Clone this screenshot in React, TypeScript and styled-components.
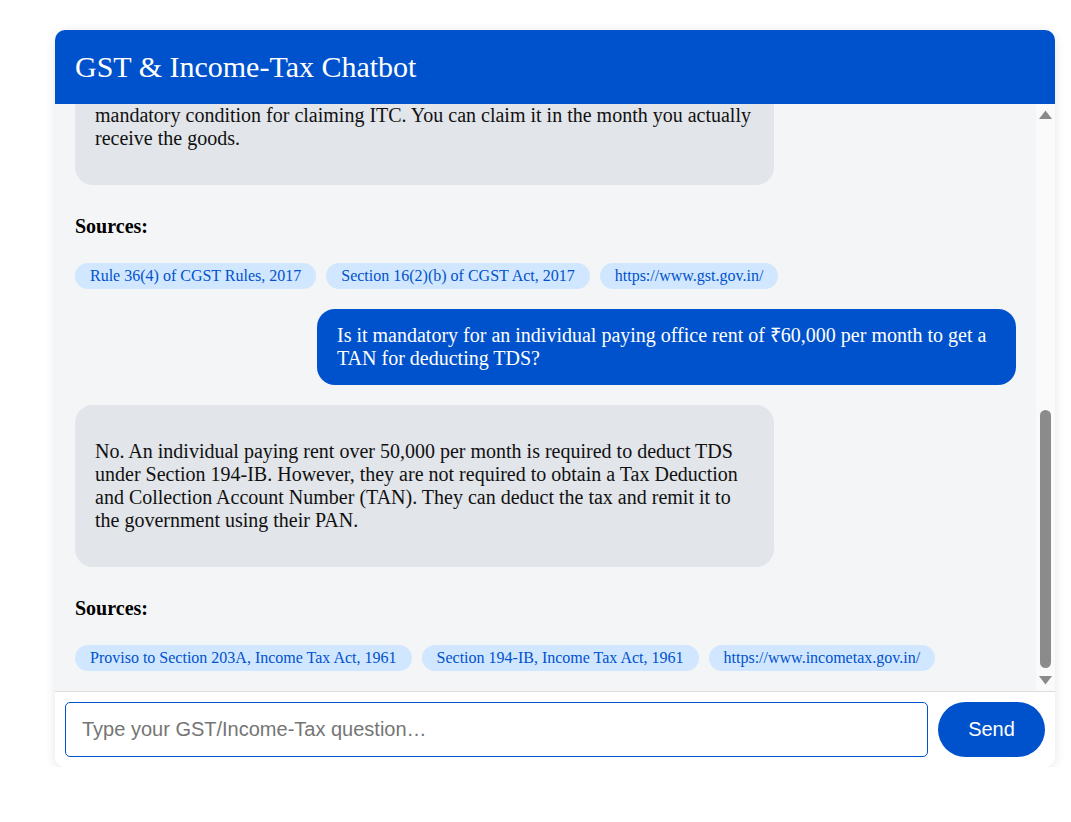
import React, { useLayoutEffect, useRef, useState } from "react";
import styled, { createGlobalStyle } from "styled-components";

const GlobalStyle = createGlobalStyle`
  html, body { margin: 0; padding: 0; background: #ffffff; }
  body { font-family: "Liberation Serif", "Times New Roman", serif; }
  * { box-sizing: border-box; }
`;

const Page = styled.div`
  padding: 30px 16px 0 55px;
`;

const Card = styled.div`
  width: 1000px;
  background: #ffffff;
  border-radius: 10px;
  overflow: hidden;
  box-shadow: 0 2px 12px rgba(0, 0, 0, 0.1);
  display: flex;
  flex-direction: column;
`;

const Header = styled.header`
  height: 74px;
  background: #0052cc;
  color: #ffffff;
  display: flex;
  align-items: center;
  padding: 0 20px;
`;

const Title = styled.h1`
  margin: 0;
  font-family: "Liberation Serif", "Times New Roman", serif;
  font-weight: 400;
  font-size: 30px;
`;

const RAIL_W = 19;
const BTN_H = 19;

const Viewport = styled.div`
  position: relative;
  height: 587px;
  background: #f4f5f7;
`;

const Messages = styled.div`
  height: 100%;
  overflow-y: auto;
  padding: 20px ${20 + RAIL_W}px 20px 20px;
  display: flex;
  flex-direction: column;
  gap: 20px;
  scrollbar-width: none;
  &::-webkit-scrollbar { display: none; }
`;

const Rail = styled.div`
  position: absolute;
  top: 0;
  right: 0;
  bottom: 0;
  width: ${RAIL_W}px;
  background: #fafafa;
  display: flex;
  flex-direction: column;
  justify-content: space-between;
`;

const ArrowButton = styled.svg`
  display: block;
  width: ${RAIL_W}px;
  height: ${BTN_H}px;
`;

const Thumb = styled.div`
  position: absolute;
  left: 4px;
  width: 11px;
  background: #8b8b8b;
  border-radius: 6px;
`;

const Bubble = styled.div<{ $user?: boolean }>`
  max-width: 699px;
  align-self: ${(p) => (p.$user ? "flex-end" : "flex-start")};
  background: ${(p) => (p.$user ? "#0052cc" : "#e2e5ea")};
  color: ${(p) => (p.$user ? "#ffffff" : "#111111")};
  border-radius: 18px;
  padding: ${(p) => (p.$user ? "15px 20px" : "35px 20px")};
  font-size: 20px;
  line-height: 23px;
  flex-shrink: 0;
`;

const Sources = styled.div`
  padding-top: 10px;
  flex-shrink: 0;
`;

const SourcesLabel = styled.div`
  font-weight: 700;
  font-size: 20px;
  line-height: 23px;
  color: #000000;
`;

const ChipRow = styled.div`
  margin-top: 25px;
  display: flex;
  flex-wrap: wrap;
  gap: 10px;
`;

const Chip = styled.span`
  height: 26px;
  display: inline-flex;
  align-items: center;
  padding: 0 15px;
  border-radius: 13px;
  background: #d1e7ff;
  color: #0052cc;
  font-size: 16px;
`;

const InputBar = styled.div`
  border-top: 1px solid #dddddd;
  padding: 10px;
  display: flex;
  gap: 10px;
  background: #ffffff;
`;

const TextInput = styled.input`
  flex: 1;
  height: 55px;
  border: 1px solid #0052cc;
  border-radius: 5px;
  padding: 0 16px;
  font-family: "Liberation Sans", Arial, sans-serif;
  font-size: 20px;
  color: #222222;
  outline: none;
  &::placeholder { color: #757575; }
`;

const SendButton = styled.button`
  width: 107px;
  height: 55px;
  border: none;
  border-radius: 28px;
  background: #0052cc;
  color: #ffffff;
  font-family: "Liberation Sans", Arial, sans-serif;
  font-size: 20px;
  cursor: pointer;
`;

type Msg =
  | { kind: "user"; text: React.ReactNode }
  | { kind: "bot"; text: React.ReactNode }
  | { kind: "sources"; items: string[] };

const messages: Msg[] = [
  { kind: "user", text: "What is the GST rate on restaurant services?" },
  {
    kind: "bot",
    text: "Restaurant services (other than those in hotels with room tariff above ₹7,500) attract GST at 5% without Input Tax Credit. Outdoor catering is taxed at 18% with ITC.",
  },
  {
    kind: "sources",
    items: ["Notification No. 11/2017-Central Tax (Rate)", "https://www.gst.gov.in/"],
  },
  {
    kind: "user",
    text: "I received goods in April but the supplier's invoice is dated March. Can I claim ITC in March itself?",
  },
  {
    kind: "bot",
    text: (
      <>
        No. The date on the invoice does not decide when you can take Input Tax Credit. Under
        Section 16(2)(b) of the CGST Act, 2017, you are entitled to credit only after the goods
        have actually been received, and Rule 36(4) requires the invoice to be reflected in your
        GSTR-2B. Where goods are received in lots or instalments, credit is available only on
        receipt of the last lot. Since the goods reached you in April, the credit belongs to April
        and not to March. Receipt of the goods is a
        <br />
        mandatory condition for claiming ITC. You can claim it in the month you actually receive the goods.
      </>
    ),
  },
  {
    kind: "sources",
    items: ["Rule 36(4) of CGST Rules, 2017", "Section 16(2)(b) of CGST Act, 2017", "https://www.gst.gov.in/"],
  },
  {
    kind: "user",
    text: "Is it mandatory for an individual paying office rent of ₹60,000 per month to get a TAN for deducting TDS?",
  },
  {
    kind: "bot",
    text: "No. An individual paying rent over 50,000 per month is required to deduct TDS under Section 194-IB. However, they are not required to obtain a Tax Deduction and Collection Account Number (TAN). They can deduct the tax and remit it to the government using their PAN.",
  },
  {
    kind: "sources",
    items: [
      "Proviso to Section 203A, Income Tax Act, 1961",
      "Section 194-IB, Income Tax Act, 1961",
      "https://www.incometax.gov.in/",
    ],
  },
];

export default function App() {
  const listRef = useRef<HTMLDivElement>(null);
  const [thumb, setThumb] = useState({ top: 302, height: 265 });

  useLayoutEffect(() => {
    const el = listRef.current;
    if (!el) return;
    el.scrollTop = el.scrollHeight;
    const track = el.clientHeight - 2 * BTN_H;
    const len = (track * el.clientHeight) / el.scrollHeight;
    const top = BTN_H + (track * el.scrollTop) / el.scrollHeight;
    setThumb({ top: top + 4, height: len - 8 });
  }, []);

  return (
    <>
      <GlobalStyle />
      <Page>
        <Card>
          <Header>
            <Title>GST &amp; Income-Tax Chatbot</Title>
          </Header>
          <Viewport>
            <Messages ref={listRef}>
              {messages.map((m, i) =>
                m.kind === "sources" ? (
                  <Sources key={i}>
                    <SourcesLabel>Sources:</SourcesLabel>
                    <ChipRow>
                      {m.items.map((s) => (
                        <Chip key={s}>{s}</Chip>
                      ))}
                    </ChipRow>
                  </Sources>
                ) : (
                  <Bubble key={i} $user={m.kind === "user"}>
                    {m.text}
                  </Bubble>
                )
              )}
            </Messages>
            <Rail>
              <ArrowButton viewBox="0 0 19 19">
                <polygon points="3,15 9.5,6.5 16,15" fill="#8a8a8a" />
              </ArrowButton>
              <Thumb style={{ top: thumb.top, height: thumb.height }} />
              <ArrowButton viewBox="0 0 19 19">
                <polygon points="3,4 16,4 9.5,12.5" fill="#8a8a8a" />
              </ArrowButton>
            </Rail>
          </Viewport>
          <InputBar>
            <TextInput placeholder="Type your GST/Income-Tax question…" />
            <SendButton>Send</SendButton>
          </InputBar>
        </Card>
      </Page>
    </>
  );
}
